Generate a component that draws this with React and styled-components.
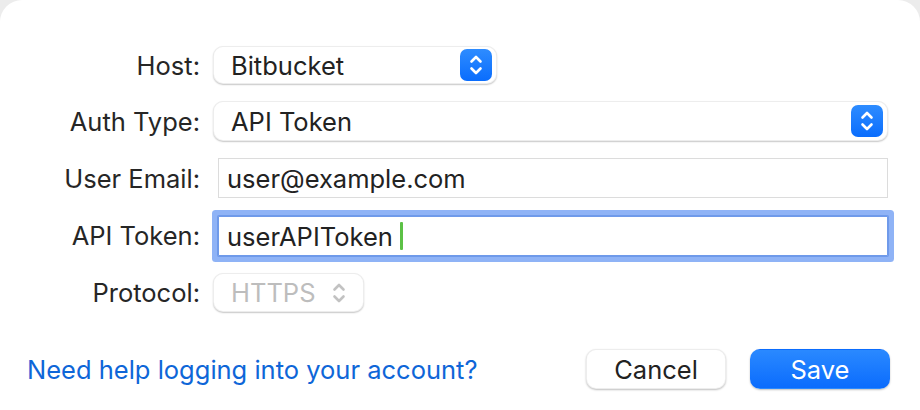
import React from "react";
import styled, { createGlobalStyle } from "styled-components";

const GlobalStyle = createGlobalStyle`
  html, body {
    margin: 0;
    padding: 0;
    background: #ececec;
  }
  body {
    font-family: Inter, "Noto Sans", "Liberation Sans", sans-serif;
    -webkit-font-smoothing: antialiased;
  }
`;

const Sheet = styled.div`
  width: 920px;
  height: 410px;
  box-sizing: border-box;
  background: #ffffff;
  border-radius: 22px 22px 0 0;
  padding: 46px 27px 0 0;
  display: flex;
  flex-direction: column;
`;

const Form = styled.div`
  display: grid;
  grid-template-columns: 200px 1fr;
  column-gap: 13px;
  row-gap: 17px;
  align-items: center;
  padding-right: 5px;
`;

const Label = styled.label`
  text-align: right;
  font-size: 25.5px;
  color: #262626;
`;

const Popup = styled.div`
  display: flex;
  align-items: center;
  justify-content: space-between;
  box-sizing: border-box;
  width: ${({ width }) => width || "100%"};
  height: ${({ height }) => height || "40px"};
  padding: 0 4px 0 17px;
  background: #ffffff;
  border: 1px solid rgba(0, 0, 0, 0.07);
  border-radius: 10px;
  box-shadow: 0 1px 1.5px rgba(0, 0, 0, 0.22);
  font-size: 25.5px;
  color: ${({ disabled }) => (disabled ? "#bdbdbd" : "#222222")};
`;

const StepperButton = styled.span`
  display: flex;
  align-items: center;
  justify-content: center;
  width: 32px;
  height: 32px;
  border-radius: 7px;
  background: linear-gradient(#2e8cff, #0a6dfd);
`;

const DisabledStepper = styled.span`
  display: flex;
  align-items: center;
  justify-content: center;
  width: 32px;
  height: 32px;
  margin-right: 4px;
`;

const TextField = styled.div`
  display: flex;
  align-items: center;
  box-sizing: border-box;
  height: 40px;
  margin-left: 5px;
  padding-left: 8px;
  background: #ffffff;
  border: 1px solid #dcdcdc;
  border-bottom-color: #c4c4c4;
  font-size: 25.5px;
  color: #222222;
  box-shadow: ${({ focused }) =>
    focused ? "0 0 0 1px #6f9aea, 0 0 0 6px #8fb3f6" : "none"};
  border-color: ${({ focused }) => (focused ? "#6f9aea" : "#dcdcdc")};
  border-radius: ${({ focused }) => (focused ? "1px" : "0")};
  margin-top: ${({ focused }) => (focused ? "1px" : "0")};
`;

const Caret = styled.span`
  display: inline-block;
  width: 3px;
  height: 28px;
  margin-left: 7px;
  border-radius: 1px;
  background: #5cc146;
`;

const Footer = styled.div`
  display: flex;
  align-items: center;
  margin-top: 37px;
  padding-left: 27px;
  padding-right: 3px;
`;

const HelpLink = styled.a`
  flex: 1;
  font-size: 25.5px;
  color: #0e66d8;
  text-decoration: none;
  cursor: pointer;
`;

const Button = styled.button`
  width: 140px;
  height: 40px;
  margin-left: 24px;
  border-radius: 10px;
  font-family: inherit;
  font-size: 25.5px;
  cursor: pointer;
  color: ${({ primary }) => (primary ? "#ffffff" : "#222222")};
  background: ${({ primary }) =>
    primary ? "linear-gradient(#2a89ff, #0b6cfd)" : "#ffffff"};
  border: 1px solid
    ${({ primary }) => (primary ? "transparent" : "rgba(0, 0, 0, 0.07)")};
  box-shadow: 0 1px 2px rgba(0, 0, 0, 0.25);
`;

const Chevrons = ({ color = "#ffffff", width = 14 }) => (
  <svg width={width} height="24" viewBox="0 0 14 24" fill="none">
    <path
      d="M2.5 8.5 L7 4 L11.5 8.5"
      stroke={color}
      strokeWidth="2.6"
      strokeLinecap="round"
      strokeLinejoin="round"
    />
    <path
      d="M2.5 15.5 L7 20 L11.5 15.5"
      stroke={color}
      strokeWidth="2.6"
      strokeLinecap="round"
      strokeLinejoin="round"
    />
  </svg>
);

const App = () => {
  return (
    <>
      <GlobalStyle />
      <Sheet>
        <Form>
          <Label>Host:</Label>
          <Popup width="284px" height="38px">
            Bitbucket
            <StepperButton>
              <Chevrons />
            </StepperButton>
          </Popup>

          <Label>Auth Type:</Label>
          <Popup>
            API Token
            <StepperButton>
              <Chevrons />
            </StepperButton>
          </Popup>

          <Label>User Email:</Label>
          <TextField>user@example.com</TextField>

          <Label>API Token:</Label>
          <TextField focused>
            userAPIToken
            <Caret />
          </TextField>

          <Label>Protocol:</Label>
          <Popup width="151px" height="39px" disabled>
            HTTPS
            <DisabledStepper>
              <Chevrons color="#c2c2c2" />
            </DisabledStepper>
          </Popup>
        </Form>

        <Footer>
          <HelpLink>Need help logging into your account?</HelpLink>
          <Button>Cancel</Button>
          <Button primary>Save</Button>
        </Footer>
      </Sheet>
    </>
  );
};

export default App;
